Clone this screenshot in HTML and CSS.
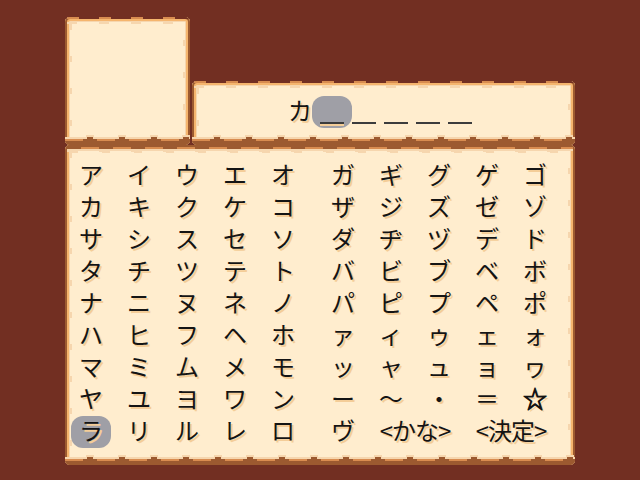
FILE: index.html
```html
<!DOCTYPE html>
<html lang="ja">
<head>
    <title>名前入力</title>
    <meta charset="UTF-8">
    <link rel="stylesheet" href="styles.css">
</head>
<body>
    <div class="screen">
        <div class="panel portrait"></div>
        <div class="panel name-box">
            <div class="slot">カ</div>
            <div class="slot blank current"></div>
            <div class="slot blank"></div>
            <div class="slot blank"></div>
            <div class="slot blank"></div>
            <div class="slot blank"></div>
        </div>
        <div class="panel keyboard">
            <div class="keys">
                <span>ア</span><span>イ</span><span>ウ</span><span>エ</span><span>オ</span>
                <span>カ</span><span>キ</span><span>ク</span><span>ケ</span><span>コ</span>
                <span>サ</span><span>シ</span><span>ス</span><span>セ</span><span>ソ</span>
                <span>タ</span><span>チ</span><span>ツ</span><span>テ</span><span>ト</span>
                <span>ナ</span><span>ニ</span><span>ヌ</span><span>ネ</span><span>ノ</span>
                <span>ハ</span><span>ヒ</span><span>フ</span><span>ヘ</span><span>ホ</span>
                <span>マ</span><span>ミ</span><span>ム</span><span>メ</span><span>モ</span>
                <span>ヤ</span><span>ユ</span><span>ヨ</span><span>ワ</span><span>ン</span>
                <span class="selected">ラ</span><span>リ</span><span>ル</span><span>レ</span><span>ロ</span>
            </div>
            <div class="keys">
                <span>ガ</span><span>ギ</span><span>グ</span><span>ゲ</span><span>ゴ</span>
                <span>ザ</span><span>ジ</span><span>ズ</span><span>ゼ</span><span>ゾ</span>
                <span>ダ</span><span>ヂ</span><span>ヅ</span><span>デ</span><span>ド</span>
                <span>バ</span><span>ビ</span><span>ブ</span><span>ベ</span><span>ボ</span>
                <span>パ</span><span>ピ</span><span>プ</span><span>ペ</span><span>ポ</span>
                <span>ァ</span><span>ィ</span><span>ゥ</span><span>ェ</span><span>ォ</span>
                <span>ッ</span><span>ャ</span><span>ュ</span><span>ョ</span><span>ヮ</span>
                <span>ー</span><span>〜</span><span>・</span><span>＝</span><span class="star">☆</span>
                <span>ヴ</span><span class="wide">&lt;かな&gt;</span><span class="wide">&lt;決定&gt;</span>
            </div>
        </div>
    </div>
</body>
</html>
```

FILE: styles.css
```css
body {
    margin: 0;
    height: 480px;
    overflow: hidden;
    background-color: #722f22;
    font-family: "Noto Sans CJK JP", "DejaVu Sans", sans-serif;
    font-size: 24px;
    color: #141414;
    text-shadow: 2px 2px 0 #f4cd98;
}

.screen {
    display: grid;
    grid-template-columns: 125px 383px;
    grid-template-rows: 64px 64px 320px;
    column-gap: 2px;
    width: 510px;
    padding: 17px 0 0 65px;
}

/* cream window with a torn paper edge */
.panel {
    --edge-gap: #722f22;
    --edge-top: #d88c50;
    position: relative;
    box-sizing: border-box;
    background-color: #ffedce;
    border-radius: 5px;
    box-shadow:
        inset 0 0 0 2px #9c5a30,
        inset 0 0 0 4px #f5b56e,
        inset 0 0 0 5px #f6d6ae;
}

.panel::after {
    content: '';
    position: absolute;
    inset: 0;
    border-radius: 5px;
    pointer-events: none;
    background:
        /* top */
        linear-gradient(90deg, var(--edge-gap) 20px, transparent 20px) 14px 0 / 32px 2px repeat-x,
        linear-gradient(var(--edge-top), var(--edge-top)) 0 0 / 100% 2px no-repeat,
        linear-gradient(90deg, #f6d6ae 10px, transparent 10px) 2px 5px / 32px 2px repeat-x,
        /* bottom */
        linear-gradient(90deg, #f6d6ae 8px, transparent 8px) 21px calc(100% - 8px) / 32px 2px repeat-x,
        linear-gradient(90deg, #9c5a30 6px, transparent 6px) 22px calc(100% - 6px) / 32px 2px repeat-x,
        linear-gradient(90deg, #9c5a30 14px, transparent 14px) 18px calc(100% - 4px) / 32px 2px repeat-x,
        linear-gradient(#f6d6ae, #f6d6ae) 0 calc(100% - 6px) / 100% 2px no-repeat,
        linear-gradient(#d88c50, #d88c50) 0 calc(100% - 4px) / 100% 2px no-repeat,
        linear-gradient(#9c5a30, #9c5a30) 0 100% / 100% 4px no-repeat,
        /* sides */
        linear-gradient(#f6d6ae 6px, transparent 6px) 5px 7px / 2px 32px repeat-y,
        linear-gradient(#f6d6ae 6px, transparent 6px) calc(100% - 5px) 23px / 2px 32px repeat-y;
}

/* the keyboard shares its top edge with the windows above */
.keyboard {
    --edge-gap: #9c5a30;
    --edge-top: #9c5a30;
    grid-column: 1 / 3;
    grid-row: 3;
    display: flex;
    gap: 12px;
    padding: 15px 0 0 2px;
}

.keyboard::before {
    content: '';
    position: absolute;
    top: 0;
    left: 0;
    right: 0;
    height: 8px;
    pointer-events: none;
    background:
        linear-gradient(90deg, #f6d6ae 8px, transparent 8px) 5px 6px / 32px 2px repeat-x,
        linear-gradient(90deg, #9c5a30 14px, transparent 14px) 2px 2px / 32px 2px repeat-x,
        linear-gradient(#f6d6ae, #f6d6ae) 2px 4px / calc(100% - 4px) 2px no-repeat,
        linear-gradient(#d88c50, #d88c50) 2px 2px / calc(100% - 4px) 2px no-repeat;
}

.portrait {
    grid-column: 1;
    grid-row: 1 / 3;
}

.name-box {
    grid-column: 2;
    grid-row: 2;
    display: flex;
    padding: 15px 0 0 92px;
}

.slot {
    position: relative;
    z-index: 1;
    width: 32px;
    height: 32px;
    line-height: 28px;
    text-align: center;
}

.slot.blank::after {
    content: '';
    position: absolute;
    left: 4px;
    bottom: 4px;
    width: 24px;
    height: 2px;
    background-color: #3c3c3c;
}

.slot.current::before {
    content: '';
    position: absolute;
    left: -4px;
    top: 0;
    width: 40px;
    height: 32px;
    border-radius: 12px;
    background-color: #9f9fa6;
}

.slot.current::after {
    box-shadow: 0 2px 0 #f4cd98;
}

.keys {
    display: grid;
    grid-template-columns: repeat(5, 48px);
    grid-auto-rows: 32px;
    justify-items: center;
}

.keys span {
    position: relative;
    z-index: 1;
    line-height: 28px;
}

.keys .wide {
    grid-column: span 2;
    letter-spacing: -1px;
}

.keys .star {
    -webkit-text-stroke: 1px #141414;
}

.keys .selected {
    width: 40px;
    height: 32px;
    border-radius: 12px;
    text-align: center;
    background-color: #9f9fa6;
}
```
